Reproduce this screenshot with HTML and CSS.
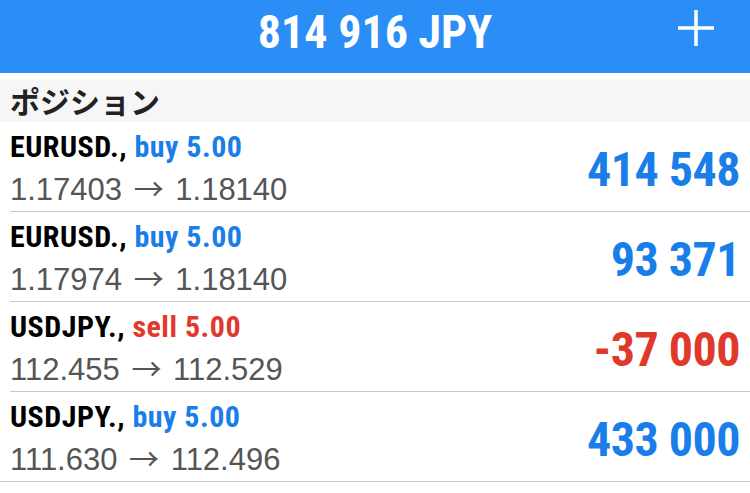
FILE: index.html
```html
<!DOCTYPE html>
<html lang="ja">
<head>
    <meta charset="UTF-8">
    <meta name="viewport" content="width=device-width, initial-scale=1.0">
    <title>ポジション</title>
    <link rel="stylesheet" href="styles.css">
</head>
<body>
    <div class="top-bar">
        <div class="balance">814 916 JPY</div>
        <a href="javascript:;" class="add-btn">
            <svg width="38" height="38" viewBox="0 0 38 38">
                <path d="M19 1 V37 M1 19 H37" stroke="#fff" stroke-width="3.5" fill="none"/>
            </svg>
        </a>
    </div>

    <div class="section-title">ポジション</div>

    <ul class="positions">
        <li class="position">
            <div class="position-info">
                <div class="position-name">EURUSD., <span class="buy">buy 5.00</span></div>
                <div class="position-price">1.17403 <span class="arrow">→</span> 1.18140</div>
            </div>
            <div class="position-profit buy">414 548</div>
        </li>
        <li class="position">
            <div class="position-info">
                <div class="position-name">EURUSD., <span class="buy">buy 5.00</span></div>
                <div class="position-price">1.17974 <span class="arrow">→</span> 1.18140</div>
            </div>
            <div class="position-profit buy">93 371</div>
        </li>
        <li class="position">
            <div class="position-info">
                <div class="position-name">USDJPY., <span class="sell">sell 5.00</span></div>
                <div class="position-price">112.455 <span class="arrow">→</span> 112.529</div>
            </div>
            <div class="position-profit sell">-37 000</div>
        </li>
        <li class="position">
            <div class="position-info">
                <div class="position-name">USDJPY., <span class="buy">buy 5.00</span></div>
                <div class="position-price">111.630 <span class="arrow">→</span> 112.496</div>
            </div>
            <div class="position-profit buy">433 000</div>
        </li>
    </ul>
</body>
</html>
```
FILE: styles.css
```css
ul,
li,
div,
span,
a {
    padding: 0px;
    margin: 0px;
}

body {
    margin: 0px;
    background-color: #ffffff;
    font-family: "Liberation Sans", Arial, sans-serif;
}

ul {
    list-style: none;
}

a {
    text-decoration: none;
}

.top-bar {
    height: 73px;
    box-sizing: border-box;
    padding-top: 4px;
    background-color: #2a8ef6;
    position: relative;
    display: flex;
    justify-content: center;
}

.balance {
    font-family: "Roboto Condensed", Roboto, sans-serif;
    font-weight: bold;
    font-size: 46px;
    line-height: 56px;
    color: #ffffff;
}

.add-btn {
    position: absolute;
    right: 35px;
    top: 9px;
    width: 38px;
    height: 38px;
}

.add-btn svg {
    display: block;
}

.section-title {
    margin-top: 6px;
    height: 43px;
    line-height: 43px;
    padding-left: 10px;
    background-color: #f6f6f6;
    font-family: "Noto Sans CJK JP", sans-serif;
    font-weight: bold;
    font-size: 30px;
    color: #222222;
}

.position {
    display: flex;
    justify-content: space-between;
    align-items: flex-start;
    height: 89px;
    margin-left: 10px;
    padding-right: 10px;
    border-bottom: 1px solid #c8c8c8;
}

.position:last-child {
    margin-left: 0px;
    padding-left: 10px;
}

.position-info {
    padding-top: 5px;
}

.position-name {
    font-family: "Roboto Condensed", Roboto, sans-serif;
    font-weight: bold;
    font-size: 30px;
    letter-spacing: 0.5px;
    line-height: 40px;
    color: #000000;
}

.position-price {
    font-size: 31px;
    line-height: 40px;
    color: #555555;
}

.arrow {
    font-family: "Noto Sans CJK JP", sans-serif;
    font-size: 30px;
    margin: 0px 3px;
}

.position-profit {
    font-family: "Roboto Condensed", Roboto, sans-serif;
    font-weight: bold;
    font-size: 48px;
    letter-spacing: -0.5px;
    line-height: 48px;
    padding-top: 24px;
}

.buy {
    color: #1a7ee9;
}

.sell {
    color: #e0392c;
}
```
